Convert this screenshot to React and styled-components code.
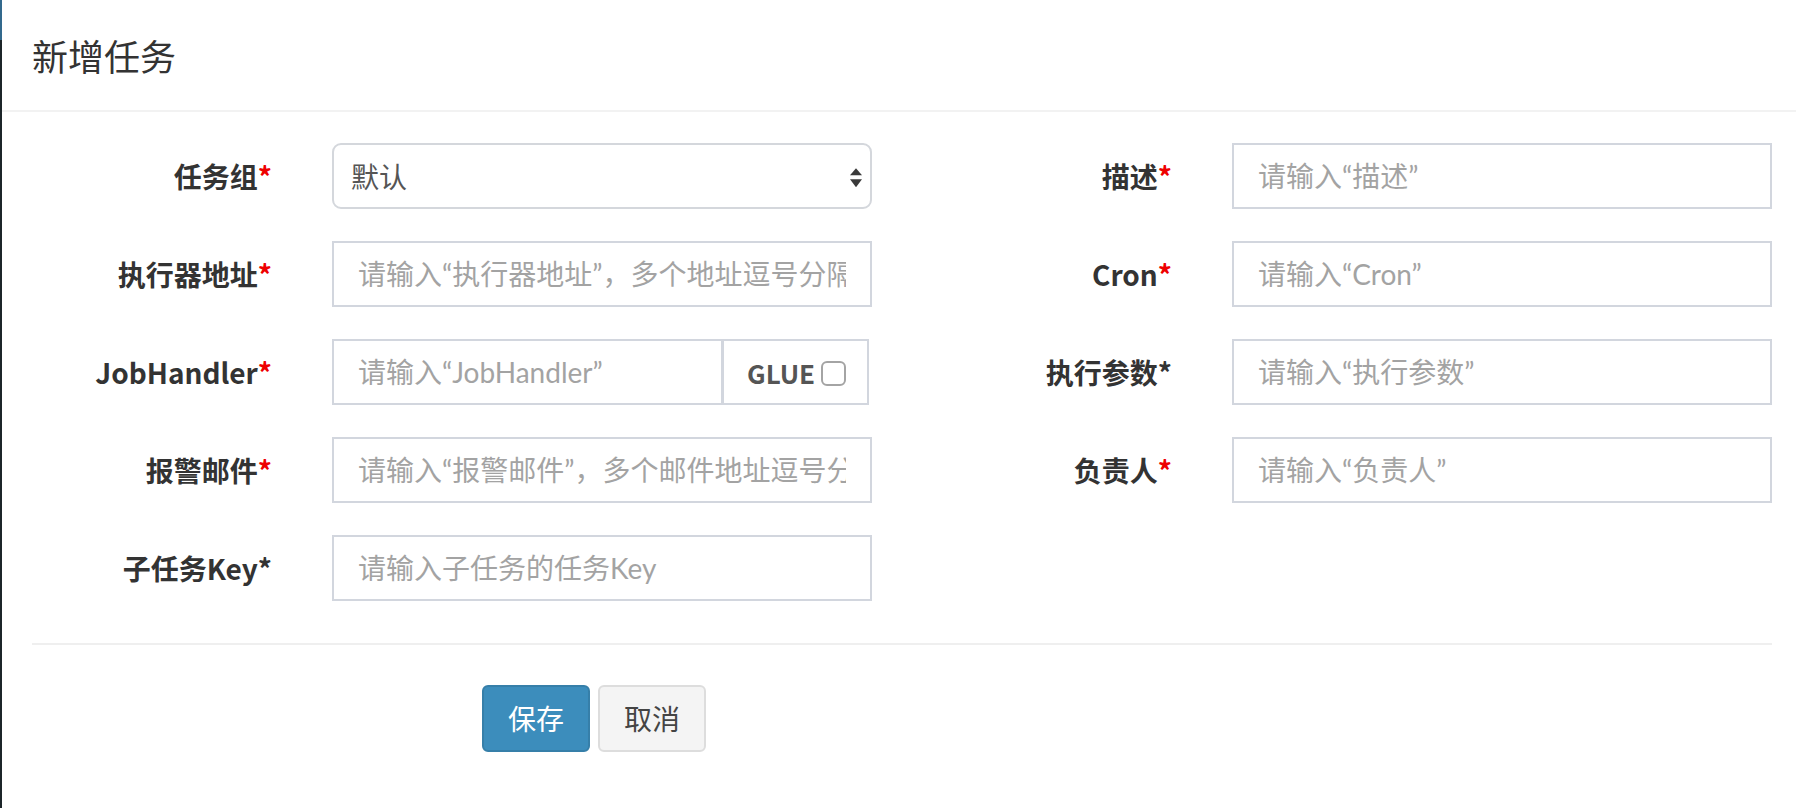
import React from "react";
import styled, { createGlobalStyle } from "styled-components";

const GlobalStyle = createGlobalStyle`
  html, body {
    margin: 0;
    padding: 0;
    background: #ffffff;
    overflow: hidden;
  }
  body {
    font-family: "Noto Sans CJK SC", "Noto Sans", sans-serif;
    color: #333333;
  }
  * { box-sizing: border-box; }
`;

const Page = styled.div`
  display: flex;
  width: 1796px;
  height: 808px;
  overflow: hidden;
  background: #ffffff;
`;

const SideStrip = styled.div`
  flex: 0 0 2px;
  display: flex;
  flex-direction: column;
  background: #1c2529;
`;

const StripLogo = styled.div`
  height: 40px;
  background: #33698d;
`;

const Modal = styled.div`
  flex: 0 0 1800px;
  background: #ffffff;
`;

const Header = styled.div`
  padding: 30px 30px 29px;
  border-bottom: 2px solid #f2f2f2;
`;

const Title = styled.h4`
  margin: 0;
  font-size: 36px;
  line-height: 51px;
  font-weight: 400;
  color: #333333;
`;

const Body = styled.div`
  padding: 31px 30px 30px;
`;

const Form = styled.form`
  display: flex;
  flex-direction: column;
  gap: 32px;
  margin: 0;
`;

const FormRow = styled.div`
  display: grid;
  grid-template-columns: 240px 540px 240px 540px;
  column-gap: 60px;
`;

const Label = styled.label`
  display: flex;
  justify-content: flex-end;
  align-items: center;
  height: 66px;
  font-size: 28px;
  font-weight: 700;
  color: #333333;
  white-space: nowrap;
`;

const Star = styled.span`
  color: ${(p) => (p.$plain ? "#333333" : "#ee0000")};
`;

const TextInput = styled.input`
  display: block;
  width: 100%;
  height: 66px;
  margin: 0;
  padding: 0 24px;
  border: 2px solid #d2d6de;
  border-radius: 0;
  background: #ffffff;
  font-family: Lato, "Noto Sans CJK SC", sans-serif;
  font-size: 28px;
  color: #555555;
  outline: none;
  &::placeholder {
    color: #a3a3a3;
    opacity: 1;
  }
`;

const SelectWrap = styled.div`
  position: relative;
  height: 66px;
`;

const SelectBox = styled.div`
  display: flex;
  align-items: center;
  height: 66px;
  padding: 0 40px 0 17px;
  border: 2px solid #d4d7dc;
  border-radius: 9px;
  background: #ffffff;
  font-size: 28px;
  color: #555555;
`;

const SelectArrows = styled.svg`
  position: absolute;
  right: 8px;
  top: 50%;
  transform: translateY(-45%);
`;

const InputGroup = styled.div`
  display: flex;
  width: 537px;
  height: 66px;
`;

const GroupInput = styled(TextInput)`
  flex: 1 1 auto;
  width: auto;
  min-width: 0;
`;

const Addon = styled.div`
  flex: 0 0 146px;
  min-width: 0;
  display: flex;
  align-items: center;
  gap: 6px;
  padding: 0 18px 0 23px;
  border: 2px solid #d2d6de;
  border-left-width: 1px;
  font-size: 26px;
  font-weight: 700;
  color: #555555;
`;

const CheckBox = styled.span`
  flex: 0 0 auto;
  display: inline-block;
  width: 25px;
  height: 25px;
  margin-top: 3px;
  border: 2px solid #a4a4a4;
  border-radius: 6px;
  background: #ffffff;
`;

const Divider = styled.div`
  height: 2px;
  margin-top: 42px;
  background: #efefef;
`;

const ButtonRow = styled.div`
  display: flex;
  gap: 8px;
  margin-top: 40px;
  padding-left: 450px;
`;

const Button = styled.button`
  height: 67px;
  padding: 0 24px;
  border-radius: 6px;
  font-family: inherit;
  font-size: 28px;
  line-height: 39px;
  cursor: pointer;
  border: 2px solid ${(p) => (p.$primary ? "#367fa9" : "#dddddd")};
  background: ${(p) => (p.$primary ? "#3c8dbc" : "#f4f4f4")};
  color: ${(p) => (p.$primary ? "#ffffff" : "#444444")};
`;

const Req = ({ plain }) => <Star $plain={plain}>*</Star>;

export default function App() {
  return (
    <>
      <GlobalStyle />
      <Page>
        <SideStrip>
          <StripLogo />
        </SideStrip>
        <Modal>
          <Header>
            <Title>新增任务</Title>
          </Header>
          <Body>
            <Form onSubmit={(e) => e.preventDefault()}>
              <FormRow>
                <Label>任务组<Req /></Label>
                <SelectWrap>
                  <SelectBox>默认</SelectBox>
                  <SelectArrows width="16" height="26" viewBox="0 0 16 26">
                    <path d="M2 11 L8 4 L14 11 Z" fill="#3a3a3a" />
                    <path d="M2 15 L14 15 L8 23 Z" fill="#3a3a3a" />
                  </SelectArrows>
                </SelectWrap>
                <Label>描述<Req /></Label>
                <TextInput placeholder="请输入“描述”" />
              </FormRow>
              <FormRow>
                <Label>执行器地址<Req /></Label>
                <TextInput placeholder="请输入“执行器地址”，多个地址逗号分隔" />
                <Label>Cron<Req /></Label>
                <TextInput placeholder="请输入“Cron”" />
              </FormRow>
              <FormRow>
                <Label>JobHandler<Req /></Label>
                <InputGroup>
                  <GroupInput placeholder="请输入“JobHandler”" />
                  <Addon>
                    GLUE
                    <CheckBox />
                  </Addon>
                </InputGroup>
                <Label>执行参数<Req plain /></Label>
                <TextInput placeholder="请输入“执行参数”" />
              </FormRow>
              <FormRow>
                <Label>报警邮件<Req /></Label>
                <TextInput placeholder="请输入“报警邮件”，多个邮件地址逗号分隔" />
                <Label>负责人<Req /></Label>
                <TextInput placeholder="请输入“负责人”" />
              </FormRow>
              <FormRow>
                <Label>子任务Key<Req plain /></Label>
                <TextInput placeholder="请输入子任务的任务Key" />
              </FormRow>
            </Form>
            <Divider />
            <ButtonRow>
              <Button $primary type="button">保存</Button>
              <Button type="button">取消</Button>
            </ButtonRow>
          </Body>
        </Modal>
      </Page>
    </>
  );
}
